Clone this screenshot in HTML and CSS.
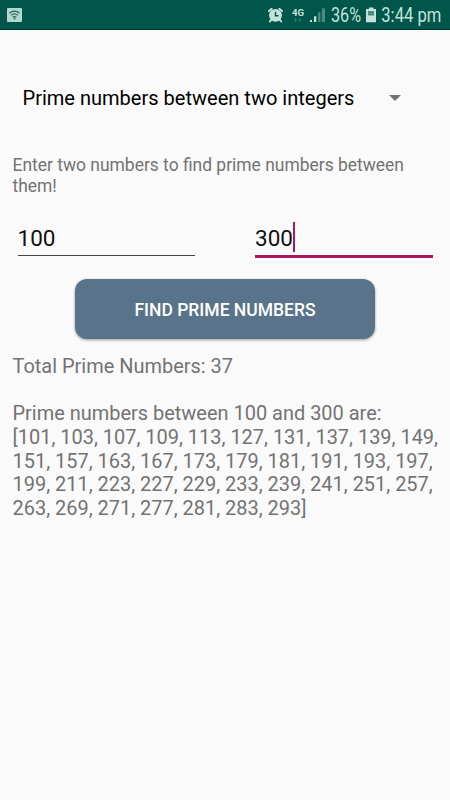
FILE: index.html
```html
<!DOCTYPE html>
<html>
<head>
  <meta charset="utf-8">
  <title>Prime Numbers</title>
  <link rel="stylesheet" href="styles.css">
</head>

<body>
<div class="statusbar">
  <svg class="wifi" width="15" height="14" viewBox="0 0 15 14">
    <rect width="15" height="14" rx="1" fill="#b4d8d0"/>
    <g fill="none" stroke="#246b60" stroke-width="1.2">
      <path d="M2.3 5.3Q7.5 1 12.7 5.3"/>
      <path d="M4 7.4Q7.5 4.5 11 7.4"/>
      <path d="M5.6 9.3Q7.5 7.7 9.4 9.3"/>
    </g>
    <circle cx="7.5" cy="10.6" r="1" fill="#246b60"/>
  </svg>
  <svg class="status" width="183" height="29" viewBox="0 0 183 29">
    <!-- alarm -->
    <g stroke="#c4e2db" stroke-width="2" stroke-linecap="round">
      <path d="M2 11L4.7 8.8M12.3 8.8L15 11M4.1 20L2.9 21.4M12.9 20L14.1 21.4"/>
    </g>
    <circle cx="8.5" cy="15.3" r="6.4" fill="#c4e2db"/>
    <path d="M8.5 11.8V15.7H11.5" fill="none" stroke="#00564a" stroke-width="1.4"/>
    <!-- network -->
    <text class="net" x="25" y="16" textLength="12" lengthAdjust="spacingAndGlyphs">4G</text>
    <path d="M28.5 18L30.5 20H29.1V22H27.9V20H26.5ZM32.7 22L30.7 20H32.1V18H33.3V20H34.7Z" fill="#34786e"/>
    <!-- signal -->
    <path d="M43 20H45V22H43ZM47 16.3H49.3V22H47Z" fill="#c4e2db"/>
    <path d="M51 12.2H53.4V22H51ZM54.8 8.2H58V22H54.8Z" fill="#4a8b80"/>
    <text class="clock" x="64" y="22.3" textLength="30" lengthAdjust="spacingAndGlyphs">36%</text>
    <!-- battery -->
    <path d="M102 7.5H106.5V9H109V22.3H99V9H102Z" fill="#c4e2db"/>
    <path d="M101 11H107V15.5H101Z" fill="#4a8b80"/>
    <text class="clock" x="114.3" y="22.3" textLength="60" lengthAdjust="spacingAndGlyphs">3:44 pm</text>
  </svg>
</div>

<div class="content">
  <div class="spinner">
    <span>Prime numbers between two integers</span>
    <span class="arrow"></span>
  </div>

  <p class="hint">Enter two numbers to find prime numbers between them!</p>

  <div class="inputs">
    <div class="field">100</div>
    <div class="field active">300<span class="cursor"></span></div>
  </div>

  <button class="find" type="button">FIND PRIME NUMBERS</button>

  <div class="result">
    <p>Total Prime Numbers: 37</p>
    <br>
    <p>Prime numbers between 100 and 300 are:</p>
    <p>[101, 103, 107, 109, 113, 127, 131, 137, 139, 149, 151, 157, 163, 167, 173, 179, 181, 191, 193, 197, 199, 211, 223, 227, 229, 233, 239, 241, 251, 257, 263, 269, 271, 277, 281, 283, 293]</p>
  </div>
</div>
</body>
</html>
```

FILE: styles.css
```css
*{
  margin: 0;
  padding: 0;
  box-sizing: border-box;
}
body{
  height: 800px;
  background: #fafafa;
  font-family: Roboto, sans-serif;
}
.statusbar{
  display: flex;
  justify-content: space-between;
  height: 30px;
  padding-left: 7px;
  background: #00564a;
  border-bottom: 1px solid #003a30;
}
.wifi{
  margin-top: 8px;
}
.status{
  overflow: visible;
}
.net{
  font-size: 9.5px;
  font-weight: bold;
  fill: #c4e2db;
}
.clock{
  font-size: 19.5px;
  fill: #c4e2db;
}
.content{
  padding: 53px 12.5px 0;
}
.spinner{
  display: flex;
  align-items: center;
  justify-content: space-between;
  height: 30px;
  padding: 0 37px 0 10px;
  font-size: 20.05px;
  color: #000;
}
.arrow{
  border: 6px solid transparent;
  border-top-color: #737373;
  border-bottom: 0;
}
.hint{
  margin-top: 42px;
  font-size: 17.45px;
  line-height: 20.5px;
  color: #737373;
}
.inputs{
  display: flex;
  justify-content: space-between;
  margin-top: 25px;
  padding: 0 5px;
}
.field{
  display: flex;
  align-items: center;
  width: 177.5px;
  height: 35px;
  padding-bottom: 1px;
  border-bottom: 1px solid #444;
  font-size: 22.5px;
  color: #111;
}
.active{
  height: 37px;
  padding-bottom: 0;
  border-bottom: 3px solid #b01563;
}
.cursor{
  width: 2px;
  height: 30px;
  margin-top: -2px;
  background: #b01563;
}
.find{
  display: block;
  width: 300px;
  height: 60px;
  margin: 21px auto 0;
  padding-top: 1px;
  border: none;
  border-radius: 12px;
  background: #58738a;
  box-shadow: 0 1px 3px rgba(0,0,0,.4);
  font-family: Roboto, sans-serif;
  font-size: 17.5px;
  font-weight: 500;
  color: #fff;
}
.result{
  margin-top: 15.5px;
  margin-right: -5px;
  font-size: 19.97px;
  line-height: 23.75px;
  color: #737373;
}
```
